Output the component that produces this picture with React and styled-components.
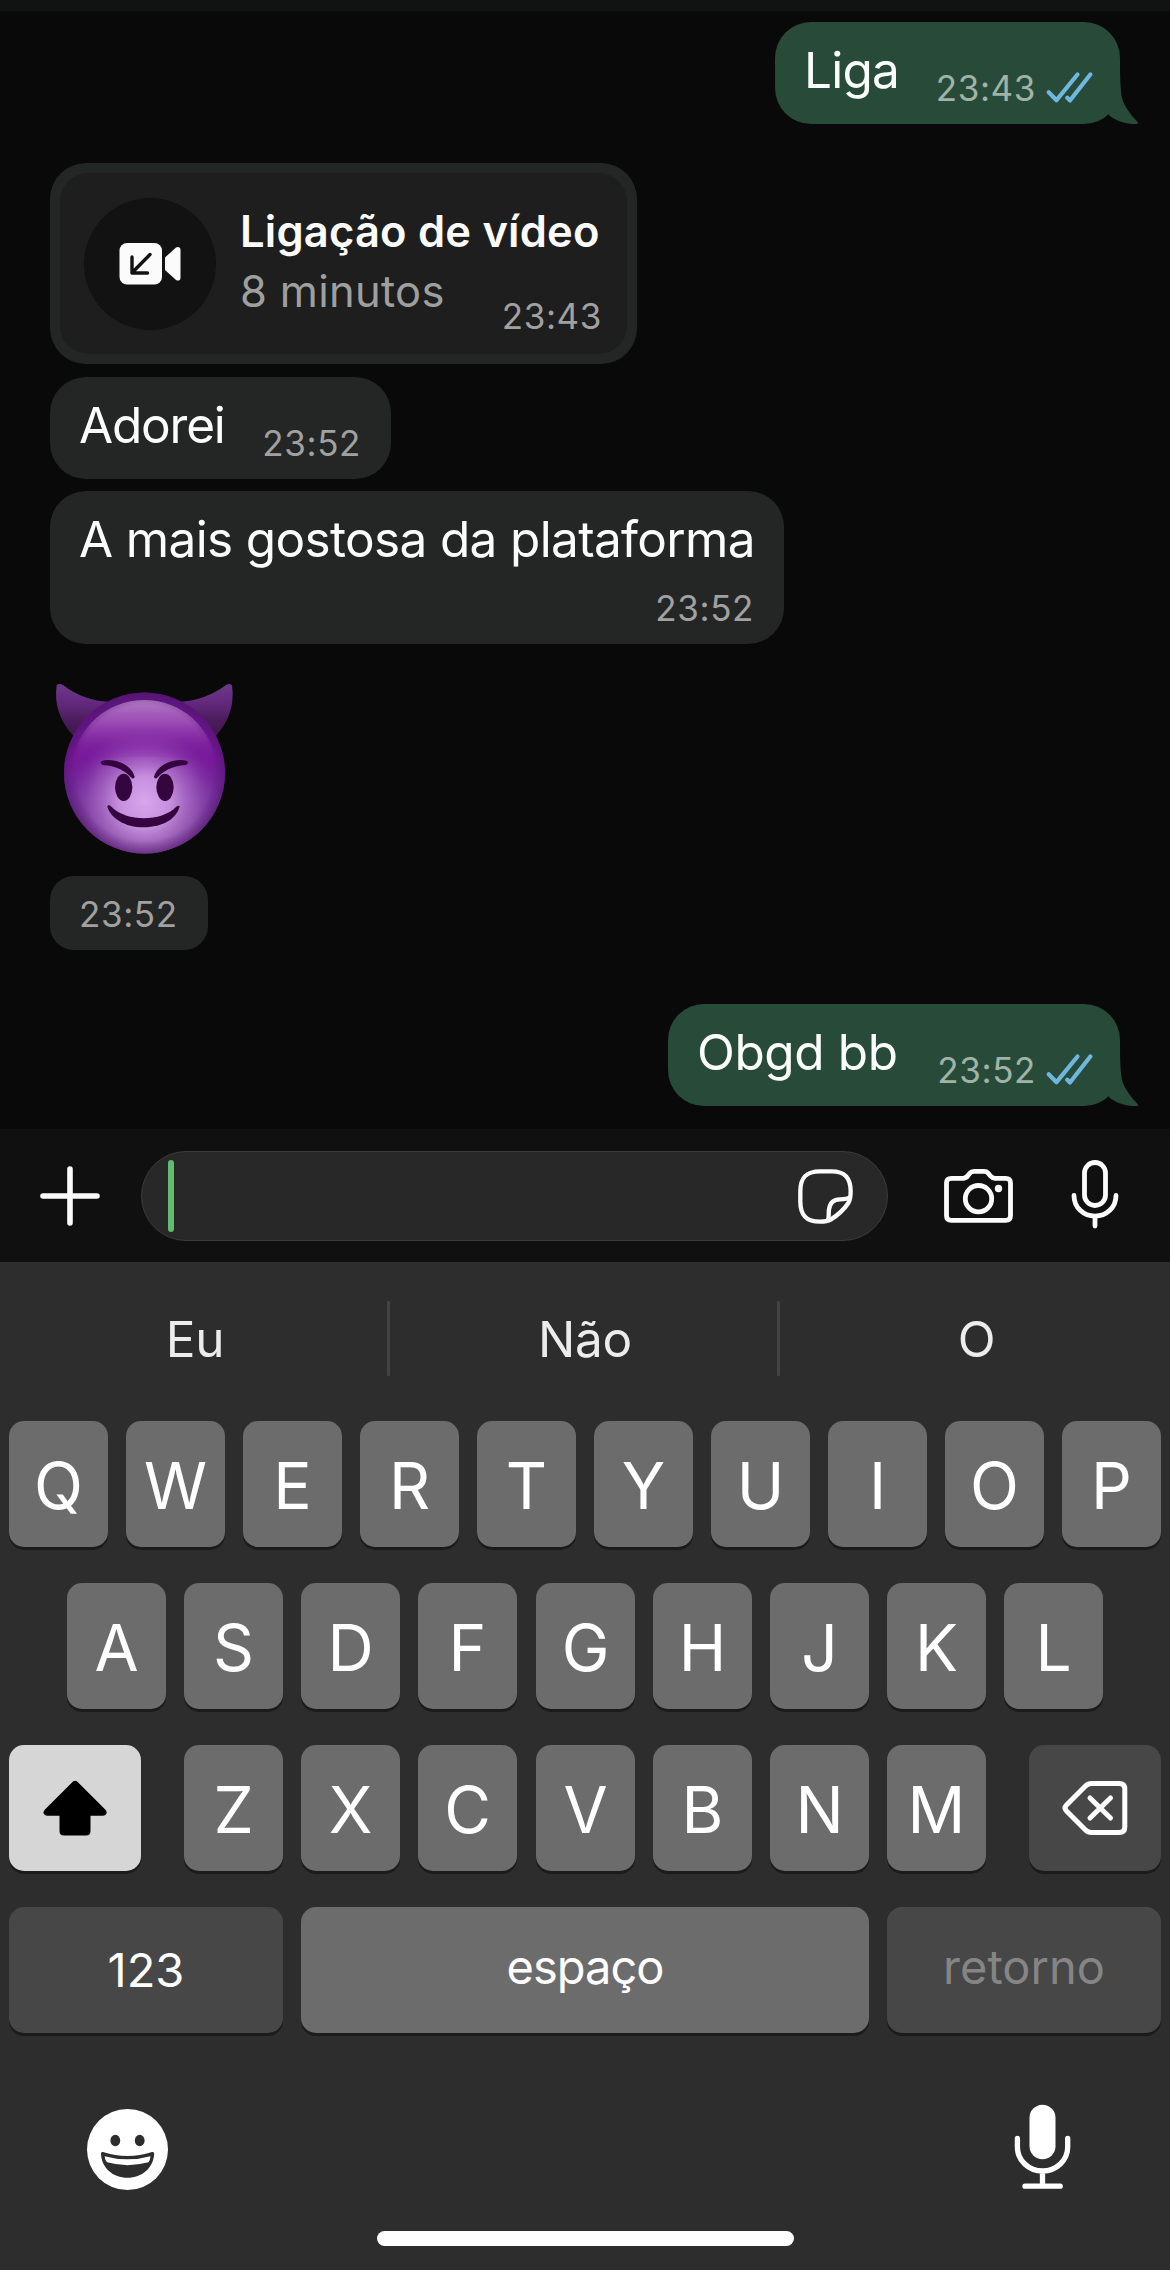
import styled, { createGlobalStyle, css } from "styled-components";

const GlobalStyle = createGlobalStyle`
    * {
        box-sizing: border-box;
    }

    body {
        margin: 0;
        background-color: #090909;
        font-family: Inter, Roboto, "Liberation Sans", sans-serif;
        -webkit-font-smoothing: antialiased;
    }

    svg {
        display: block;
        flex-shrink: 0;
    }
`

const Screen = styled.div`
    display: flex;
    flex-direction: column;
    width: 1170px;
    height: 2270px;
    overflow: hidden;
    background-color: #090909;
`

const HeaderEdge = styled.div`
    height: 11px;
    background-color: #111313;
`

const Chat = styled.main`
    display: flex;
    flex-direction: column;
    align-items: flex-start;
    height: 1118px;
    padding: 11px 50px 0 50px;
`

const Bubble = styled.div`
    position: relative;
    display: flex;
    flex-direction: ${({ $stacked }) => ($stacked ? "column" : "row")};
    justify-content: space-between;
    align-self: ${({ $sent }) => ($sent ? "flex-end" : "flex-start")};
    width: ${({ $width }) => $width}px;
    height: ${({ $height }) => $height || 102}px;
    margin-bottom: ${({ $after }) => $after || 0}px;
    padding: 18px ${({ $sent }) => ($sent ? 27 : 30)}px 16px 29px;
    border-radius: ${({ $radius }) => $radius || 36}px;
    background-color: ${({ $sent }) => ($sent ? "#284b39" : "#242625")};
`

const Message = styled.p`
    margin: 0;
    font-size: 49.5px;
    line-height: 60px;
    letter-spacing: ${({ $spacing }) => $spacing || 0}px;
    white-space: nowrap;
    color: #fbfdfc;
`

const Meta = styled.div`
    display: flex;
    align-items: center;
    align-self: flex-end;
    gap: 9px;
`

const Time = styled.span`
    font-size: 35px;
    line-height: 40px;
    letter-spacing: 0.6px;
    white-space: nowrap;
    color: ${({ $sent }) => ($sent ? "#a0b3a8" : "#a0a1a0")};
`

const Tail = styled.svg`
    position: absolute;
    right: -20px;
    bottom: 0;
`

const CallCard = styled.div`
    display: flex;
    width: 587px;
    height: 201px;
    margin-bottom: 13px;
    padding: 10px;
    border-radius: 36px;
    background-color: #242625;
`

const CallContent = styled.div`
    display: flex;
    flex: 1;
    gap: 24px;
    padding: 25px 25px 0 24px;
    border-radius: 28px;
    background-color: #1e1e1e;
`

const CallIcon = styled.div`
    display: flex;
    align-items: center;
    justify-content: center;
    flex-shrink: 0;
    width: 132px;
    height: 132px;
    border-radius: 50%;
    background-color: #121212;
`

const CallText = styled.div`
    display: flex;
    flex-direction: column;
    flex: 1;
    padding-top: 3px;
`

const CallTitle = styled.h3`
    margin: 0;
    font-size: 43.5px;
    font-weight: 600;
    line-height: 60px;
    letter-spacing: 0.2px;
    white-space: nowrap;
    color: #fbfbfb;
`

const CallInfo = styled.div`
    display: flex;
    justify-content: space-between;

    ${Time} {
        margin-top: 35px;
    }
`

const Duration = styled.span`
    font-size: 43.5px;
    line-height: 60px;
    letter-spacing: 0.3px;
    white-space: nowrap;
    color: #9e9f9f;
`

const Sticker = styled.div`
    height: 196px;
`

const InputBar = styled.div`
    display: flex;
    align-items: center;
    height: 133px;
    padding: 0 51px 0 40px;
    background-color: #101010;
`

const TextField = styled.div`
    display: flex;
    align-items: center;
    justify-content: space-between;
    width: 747px;
    height: 90px;
    margin: 0 56px 0 41px;
    padding: 0 33px 0 26px;
    border: 1px solid #3b3b3b;
    border-radius: 45px;
    background-color: #282828;
`

const Caret = styled.span`
    width: 6px;
    height: 72px;
    border-radius: 3px;
    background-color: #62bb6e;
`

const Keyboard = styled.section`
    display: flex;
    flex-direction: column;
    flex: 1;
    background-color: #2d2d2d;
`

const Suggestions = styled.div`
    display: grid;
    grid-template-columns: 387px 3px 387px 3px 390px;
    align-items: center;
    height: 153px;
    margin-bottom: 6px;
`

const Suggestion = styled.span`
    padding-left: 3px;
    font-size: 49.5px;
    line-height: 60px;
    letter-spacing: -0.3px;
    text-align: center;
    color: #ececec;
`

const Divider = styled.span`
    height: 75px;
    border-radius: 1px;
    background-color: #434343;
`

const Keys = styled.div`
    display: flex;
    flex-direction: column;
    gap: 36px;
`

const KeyRow = styled.div`
    display: flex;
    gap: 18px;
    padding: 0 ${({ $inset }) => $inset || 9}px;
`

const keyTone = {
    light: css`
        background-color: #6c6c6c;
        color: #ffffff;
    `,
    dark: css`
        background-color: #474747;
        color: #ffffff;
    `,
    active: css`
        background-color: #d6d6d6;
        color: #000000;
    `,
    disabled: css`
        background-color: #474747;
        color: #858585;
    `,
}

const Key = styled.button`
    display: flex;
    align-items: center;
    justify-content: center;
    flex-shrink: 0;
    width: ${({ $width }) => $width || 99}px;
    height: 126px;
    margin: 0 ${({ $right }) => $right || 0}px 0 ${({ $left }) => $left || 0}px;
    padding: 3px 0 0 0;
    border: none;
    border-radius: 15px;
    box-shadow: 0 3px 0 #1b1b1b;
    font-family: inherit;
    font-size: 64px;
    line-height: 1;
    ${({ $tone }) => keyTone[$tone || "light"]}
`

const IconKey = styled(Key)`
    padding: 0;
`

const WideKey = styled(Key)`
    padding: 0 0 ${({ $lift }) => $lift || 0}px 0;
    font-size: 47px;
    letter-spacing: ${({ $spacing }) => $spacing || 0}px;
`

const KeyboardFooter = styled.div`
    display: flex;
    justify-content: space-between;
    padding: 71px 99px 0 87px;
`

const SmileyIcon = styled.svg`
    margin-top: 5px;
`

const HomeIndicator = styled.div`
    width: 417px;
    height: 15px;
    margin: 41px 0 0 377px;
    border-radius: 8px;
    background-color: #fefefe;
`

function Checks() {
    return (
        <svg width="48" height="34" viewBox="0 0 48 34" fill="none" stroke="#6fb7df" strokeWidth="4.2" strokeLinecap="round" strokeLinejoin="round">
            <path d="M3.7 21.2 11.5 29.2 32.5 3.5"/>
            <path d="M22.3 26.8 25 29.5 45.3 3.5"/>
        </svg>
    )
}

function SentBubble({ text, time, width, spacing, after }) {
    return (
        <Bubble $sent $width={width} $after={after}>
            <Message $spacing={spacing}>{text}</Message>
            <Meta>
                <Time $sent>{time}</Time>
                <Checks/>
            </Meta>
            <Tail width="40" height="64" viewBox="0 0 40 64" fill="#284b39">
                <path d="M15 0H20C20 18 20.5 30 22 38C24 46 31 55 38 62.5L37.6 64C26 64.6 16 61 9 55.3L4 30Z"/>
            </Tail>
        </Bubble>
    )
}

function ReceivedBubble({ text, time, spacing, ...size }) {
    return (
        <Bubble {...size}>
            {text && <Message $spacing={spacing}>{text}</Message>}
            <Meta>
                <Time>{time}</Time>
            </Meta>
        </Bubble>
    )
}

function VideoCallIcon() {
    return (
        <svg width="62" height="42" viewBox="0 0 62 42">
            <rect x="0.5" y="0" width="42.5" height="41.5" rx="7.5" fill="#fbfbfb"/>
            <path d="M46 14.5 57 4.5Q58.5 3.6 60 4.2Q61.5 4.8 61.5 6.5V35Q61.5 36.8 60 37.4Q58.5 38 57 36.9L46 27Z" fill="#fbfbfb"/>
            <path d="M31 11.5 13 29.8M13 14V30H28.5" fill="none" stroke="#121212" strokeWidth="3.4" strokeLinecap="round" strokeLinejoin="round"/>
        </svg>
    )
}

function DevilEmoji() {
    return (
        <svg width="190" height="180" viewBox="60 60 570 540">
            <defs>
                <linearGradient id="face" x1="0" y1="0" x2="0" y2="1">
                    <stop offset="0" stopColor="#5f1580"/>
                    <stop offset="0.4" stopColor="#76189a"/>
                    <stop offset="0.65" stopColor="#74309a"/>
                    <stop offset="1" stopColor="#6b3a85"/>
                </linearGradient>
                <radialGradient id="glow" cx="0.5" cy="0.68" r="0.46">
                    <stop offset="0" stopColor="#d8a6ec"/>
                    <stop offset="0.35" stopColor="#cf9ae5" stopOpacity="0.9"/>
                    <stop offset="0.7" stopColor="#b070cc" stopOpacity="0.5"/>
                    <stop offset="1" stopColor="#8a3fae" stopOpacity="0"/>
                </radialGradient>
                <linearGradient id="shine" x1="0" y1="0" x2="0" y2="1">
                    <stop offset="0" stopColor="#b07cc4"/>
                    <stop offset="0.35" stopColor="#a04fb9" stopOpacity="0.9"/>
                    <stop offset="0.7" stopColor="#8c2fac" stopOpacity="0.4"/>
                    <stop offset="1" stopColor="#7c189c" stopOpacity="0"/>
                </linearGradient>
                <radialGradient id="rim" cx="0.5" cy="0.5" r="0.5">
                    <stop offset="0.84" stopColor="#4d1268" stopOpacity="0"/>
                    <stop offset="1" stopColor="#4d1268" stopOpacity="0.5"/>
                </radialGradient>
                <linearGradient id="horn" x1="0" y1="0" x2="0" y2="1">
                    <stop offset="0" stopColor="#6b3a88"/>
                    <stop offset="0.35" stopColor="#64297f"/>
                    <stop offset="0.7" stopColor="#4b1c5d"/>
                    <stop offset="1" stopColor="#3f174e"/>
                </linearGradient>
            </defs>
            <path d="M80 76Q88 68 100 76Q160 122 240 126L130 228Q68 160 80 76Z" fill="url(#horn)"/>
            <path d="M606 76Q598 68 588 75Q528 120 448 126L558 228Q618 160 606 76Z" fill="url(#horn)"/>
            <circle cx="343.5" cy="339" r="241.5" fill="url(#face)"/>
            <circle cx="343.5" cy="339" r="241.5" fill="url(#glow)"/>
            <path d="M343 120C458 120 548 206 560 318C500 300 440 290 343 290C246 290 186 300 126 318C138 206 228 120 343 120Z" fill="url(#shine)"/>
            <circle cx="343.5" cy="339" r="241.5" fill="url(#rim)"/>
            <g fill="#34053f">
                <ellipse cx="281" cy="382" rx="26" ry="41"/>
                <ellipse cx="405" cy="382" rx="26" ry="41"/>
                <path d="M216 302C252 295 302 310 314 350Q313 357 306 355C286 333 262 318 218 315Q207 308 216 302Z"/>
                <path d="M470 302C434 295 384 310 372 350Q373 357 380 355C400 333 424 318 468 315Q479 308 470 302Z"/>
                <path d="M234 436Q240 434 245 441C290 486 394 486 438 441Q446 434 449 439C440 476 400 502 341 502C284 502 242 474 232 440Z"/>
            </g>
        </svg>
    )
}

function PlusIcon() {
    return (
        <svg width="60" height="60" viewBox="0 0 60 60" stroke="#fbfbfb" strokeWidth="5.6" strokeLinecap="round">
            <path d="M30 3V57M3 30H57"/>
        </svg>
    )
}

function StickerIcon() {
    return (
        <svg width="56" height="56" viewBox="174 174 168 168" fill="none" stroke="#fbfbfb" strokeWidth="13" strokeLinejoin="round">
            <path d="M181 244C181 202 199 184 240 184H275C314 184 332 203 332 244C332 262 331 270 325 279C313 297 291 317 272 329C262 335 252 335 240 335C199 335 181 315 181 275Z"/>
            <path d="M264 330C268 320 265 310 267 298C270 278 282 268 300 268C312 268 322 268 330 262"/>
        </svg>
    )
}

function CameraIcon() {
    return (
        <svg width="70" height="56" viewBox="944 1168 70 56" fill="none" stroke="#fbfbfb" strokeWidth="4.8">
            <path d="M951.5 1178.3H963Q966 1178.3 968 1175.5L970 1173Q971.3 1171.4 974 1171.4H984Q986.7 1171.4 988 1173L990.5 1176Q992.5 1178.3 995 1178.3H1005.5Q1010.5 1178.3 1010.5 1183V1215.5Q1010.5 1220.4 1005.5 1220.4H951.5Q946.5 1220.4 946.5 1215.5V1183Q946.5 1178.3 951.5 1178.3Z"/>
            <circle cx="978.5" cy="1198.7" r="13.2"/>
            <circle cx="998.5" cy="1188.5" r="3.7" fill="#fbfbfb" stroke="none"/>
        </svg>
    )
}

const InputMic = styled.svg`
    margin: -3px 0 0 57px;
`

function MicIcon() {
    return (
        <InputMic width="48" height="70" viewBox="1071 1159 48 70" fill="none" stroke="#fbfbfb" strokeWidth="4.8" strokeLinecap="round">
            <rect x="1084.5" y="1162.5" width="21" height="43" rx="10.5"/>
            <path d="M1074 1195.5C1074 1207.5 1083.5 1216.2 1095 1216.2S1116 1207.5 1116 1195.5M1095 1216.2V1226"/>
        </InputMic>
    )
}

function ShiftIcon() {
    return (
        <svg width="64" height="56" viewBox="42.5 1779.5 64 56" fill="currentColor">
            <path d="M72 1781.5Q74.6 1779 77.2 1781.5L105 1809.3Q106.8 1811.5 105.8 1813.3Q105 1815.3 102.5 1815.3H90V1830.5Q90 1835 85.5 1835H63.5Q59 1835 59 1830.5V1815.3H46.7Q44.2 1815.3 43.3 1813.3Q42.3 1811.5 44.2 1809.3Z"/>
        </svg>
    )
}

function BackspaceIcon() {
    return (
        <svg width="66" height="56" viewBox="1061.5 1780 66 56" fill="none" stroke="currentColor" strokeWidth="5" strokeLinecap="round" strokeLinejoin="round">
            <path d="M1091 1783.5H1118.5Q1124.3 1783.5 1124.3 1789V1827Q1124.3 1832.5 1118.5 1832.5H1091Q1087.5 1832.5 1085 1830L1066 1811Q1063 1808 1066 1805L1085 1786Q1087.5 1783.5 1091 1783.5Z"/>
            <path d="M1089.5 1798 1110 1818M1110 1798 1089.5 1818"/>
        </svg>
    )
}

function Smiley() {
    return (
        <SmileyIcon width="81" height="81" viewBox="87 2109 81 81">
            <circle cx="127.5" cy="2149.5" r="40.5" fill="#ffffff"/>
            <ellipse cx="115.3" cy="2140.5" rx="4.9" ry="5.7" fill="#2d2d2d"/>
            <ellipse cx="139.7" cy="2140.5" rx="4.9" ry="5.7" fill="#2d2d2d"/>
            <path d="M101 2153.5Q101 2151.5 103 2152Q127.5 2159.8 152 2152Q154.2 2151.5 154.2 2153.5C153.5 2168 142 2177.8 127.5 2177.8S101.5 2168 101 2153.5Z" fill="#2d2d2d"/>
            <path d="M104.5 2156.2Q127.5 2162.5 150.5 2156.2Q150.2 2160 148.5 2162.3Q127.5 2168 107 2162.3Q105 2160 104.5 2156.2Z" fill="#ffffff"/>
        </SmileyIcon>
    )
}

function DictationIcon() {
    return (
        <svg width="57" height="86" viewBox="1013.5 2104 57 86" fill="none" stroke="#ffffff" strokeWidth="5.3" strokeLinecap="round">
            <rect x="1029" y="2104.7" width="26" height="54.6" rx="13" fill="#ffffff" stroke="none"/>
            <path d="M1016.9 2138.5V2147A25.15 24 0 0 0 1067.2 2147V2138.5M1042 2171V2186M1024.5 2186.2H1059.7"/>
        </svg>
    )
}

export default function App() {
    return (
        <Screen>
            <GlobalStyle/>
            <HeaderEdge/>
            <Chat>
                <SentBubble text="Liga" time="23:43" width={345} spacing={-0.8} after={39}/>
                <CallCard>
                    <CallContent>
                        <CallIcon><VideoCallIcon/></CallIcon>
                        <CallText>
                            <CallTitle>Ligação de vídeo</CallTitle>
                            <CallInfo>
                                <Duration>8 minutos</Duration>
                                <Time>23:43</Time>
                            </CallInfo>
                        </CallText>
                    </CallContent>
                </CallCard>
                <ReceivedBubble text="Adorei" time="23:52" spacing={-1.2} $width={341} $after={12}/>
                <ReceivedBubble text="A mais gostosa da plataforma" time="23:52" spacing={-0.65} $width={734} $height={153} $after={36} $stacked/>
                <Sticker><DevilEmoji/></Sticker>
                <ReceivedBubble time="23:52" $width={158} $height={74} $radius={24} $after={54}/>
                <SentBubble text="Obgd bb" time="23:52" width={452} spacing={-0.4}/>
            </Chat>
            <InputBar>
                <PlusIcon/>
                <TextField>
                    <Caret/>
                    <StickerIcon/>
                </TextField>
                <CameraIcon/>
                <MicIcon/>
            </InputBar>
            <Keyboard>
                <Suggestions>
                    <Suggestion>Eu</Suggestion>
                    <Divider/>
                    <Suggestion>Não</Suggestion>
                    <Divider/>
                    <Suggestion>O</Suggestion>
                </Suggestions>
                <Keys>
                    <KeyRow>
                        {[..."QWERTYUIOP"].map((letter) => <Key key={letter}>{letter}</Key>)}
                    </KeyRow>
                    <KeyRow $inset={67}>
                        {[..."ASDFGHJKL"].map((letter) => <Key key={letter} $left={letter === "G" ? 1 : 0}>{letter}</Key>)}
                    </KeyRow>
                    <KeyRow>
                        <IconKey $tone="active" $width={132} $right={25} aria-label="shift"><ShiftIcon/></IconKey>
                        {[..."ZXCVBNM"].map((letter) => <Key key={letter} $left={letter === "V" ? 1 : 0}>{letter}</Key>)}
                        <IconKey $tone="dark" $width={132} $left={25} aria-label="apagar"><BackspaceIcon/></IconKey>
                    </KeyRow>
                    <KeyRow>
                        <WideKey $tone="dark" $width={274} $lift={2}>123</WideKey>
                        <WideKey $width={568} $lift={7} $spacing={-1}>espaço</WideKey>
                        <WideKey $tone="disabled" $width={274} $lift={7}>retorno</WideKey>
                    </KeyRow>
                </Keys>
                <KeyboardFooter>
                    <Smiley/>
                    <DictationIcon/>
                </KeyboardFooter>
                <HomeIndicator/>
            </Keyboard>
        </Screen>
    )
}
